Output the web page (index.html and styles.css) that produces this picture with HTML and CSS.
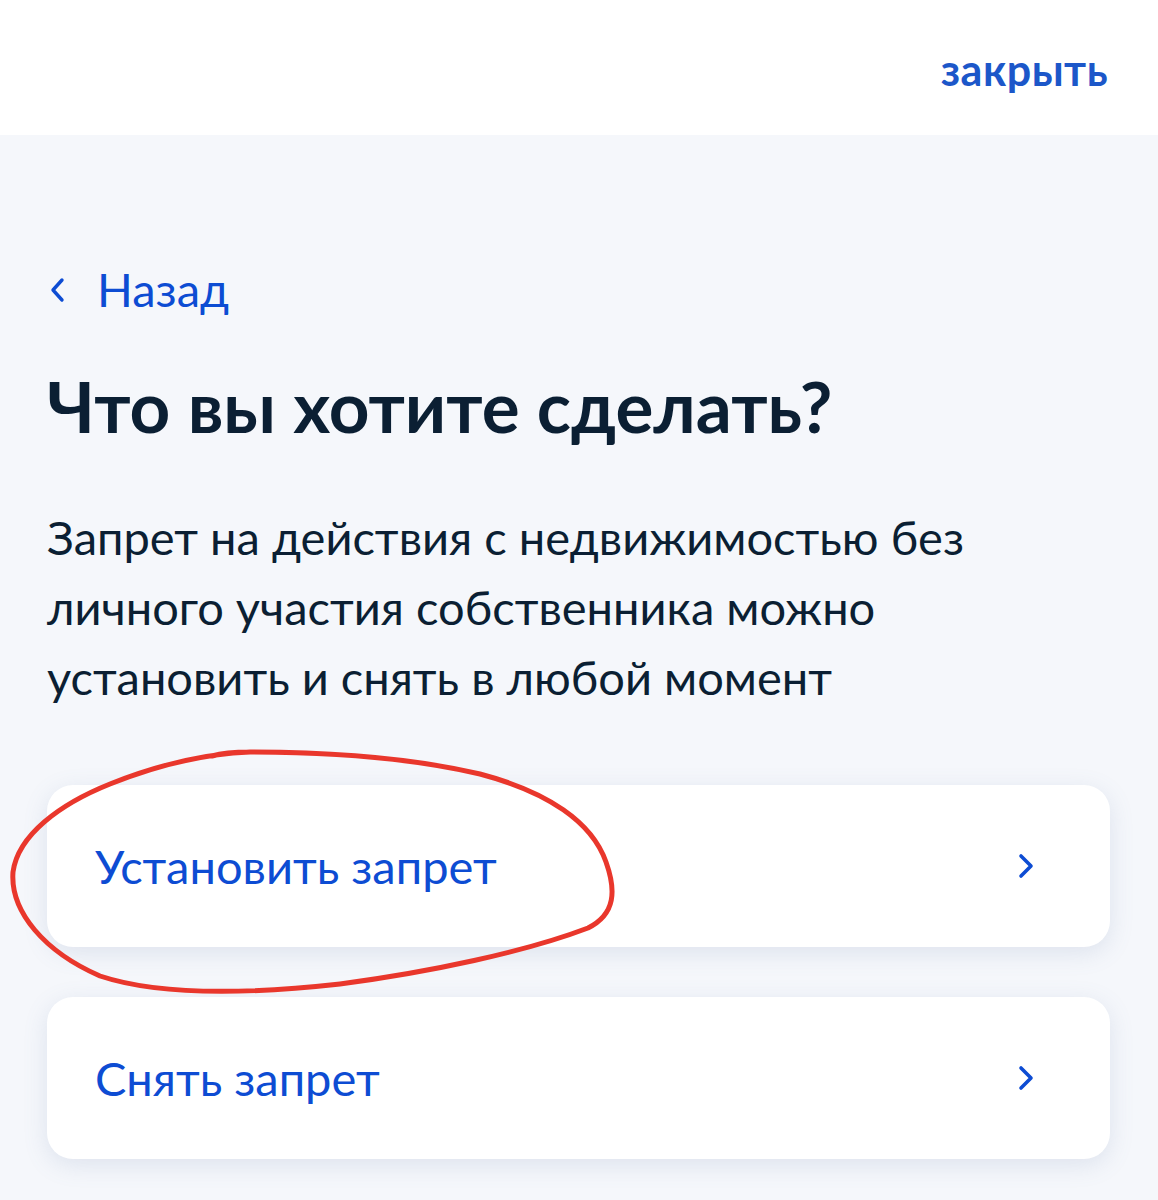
FILE: index.html
```html
<!DOCTYPE html>
<html>
<head>
    <title>Запрет на действия с недвижимостью</title>
    <link rel="stylesheet" href="styles.css">
</head>
<body>
    <div class="top-bar">
        <a class="close-link" href="#">закрыть</a>
    </div>

    <div class="page">
        <a class="back-link" href="#">
            <svg class="back-icon" width="18" height="28" viewBox="0 0 18 28">
                <path d="M13 4 L4 14 L13 24" fill="none" stroke="#0d4cd3" stroke-width="3.4" stroke-linecap="round" stroke-linejoin="round"/>
            </svg>
            Назад
        </a>

        <h1>Что вы хотите сделать?</h1>

        <p class="intro">Запрет на действия с недвижимостью без личного участия собственника можно установить и снять в любой момент</p>

        <div class="options">
            <a class="option" href="#">
                <span>Установить запрет</span>
                <svg class="arrow" width="18" height="30" viewBox="0 0 18 30">
                    <path d="M4 5 L14 15 L4 25" fill="none" stroke="#0d4cd3" stroke-width="3.6" stroke-linecap="round" stroke-linejoin="round"/>
                </svg>
            </a>
            <a class="option" href="#">
                <span>Снять запрет</span>
                <svg class="arrow" width="18" height="30" viewBox="0 0 18 30">
                    <path d="M4 5 L14 15 L4 25" fill="none" stroke="#0d4cd3" stroke-width="3.6" stroke-linecap="round" stroke-linejoin="round"/>
                </svg>
            </a>
        </div>
    </div>

    <!-- hand-drawn mark over the first option -->
    <svg class="scribble" width="640" height="260" viewBox="0 0 640 260">
        <path d="M250 12 C200 14 150 28 110 44 C60 64 18 95 13 132 C10 172 45 212 100 236 C160 256 250 254 340 244 C430 232 525 212 588 188 C616 174 616 150 606 122 C592 82 548 52 480 34 C420 20 340 12 250 12 C232 12 222 13 212 16"
              fill="none" stroke="#e9372c" stroke-width="5" stroke-linecap="round"/>
    </svg>
</body>
</html>
```

FILE: styles.css
```css
body {
    margin: 0;
    font-family: Lato, "Noto Sans", sans-serif;
    background-color: #f5f7fb;
    color: #0b1f33;
    position: relative;
}

a {
    text-decoration: none;
}

.top-bar {
    background-color: #fff;
    height: 135px;
    display: flex;
    justify-content: flex-end;
    align-items: flex-start;
    padding-right: 50px;
}

.close-link {
    margin-top: 44px;
    color: #1c57c9;
    font-size: 43px;
    font-weight: bold;
    letter-spacing: 0.5px;
}

.page {
    padding: 126px 48px 40px 47px;
}

.back-link {
    display: flex;
    align-items: center;
    gap: 30px;
    color: #0d4cd3;
    font-size: 47px;
    padding-left: 2px;
}

.back-icon {
    margin-top: 2px;
}

h1 {
    margin: 44px 0 0;
    font-size: 71px;
    font-weight: bold;
    line-height: 90px;
}

.intro {
    margin: 51px 0 0;
    font-size: 47px;
    line-height: 70px;
    max-width: 980px;
}

.options {
    margin-top: 73px;
    display: flex;
    flex-direction: column;
    gap: 50px;
}

.option {
    display: flex;
    align-items: center;
    justify-content: space-between;
    height: 162px;
    padding: 0 75px 0 48px;
    background-color: #fff;
    border-radius: 26px;
    box-shadow: 0 6px 24px rgba(102, 125, 170, 0.16);
    color: #0d4cd3;
    font-size: 47px;
}

.scribble {
    position: absolute;
    left: 0;
    top: 740px;
}
```
